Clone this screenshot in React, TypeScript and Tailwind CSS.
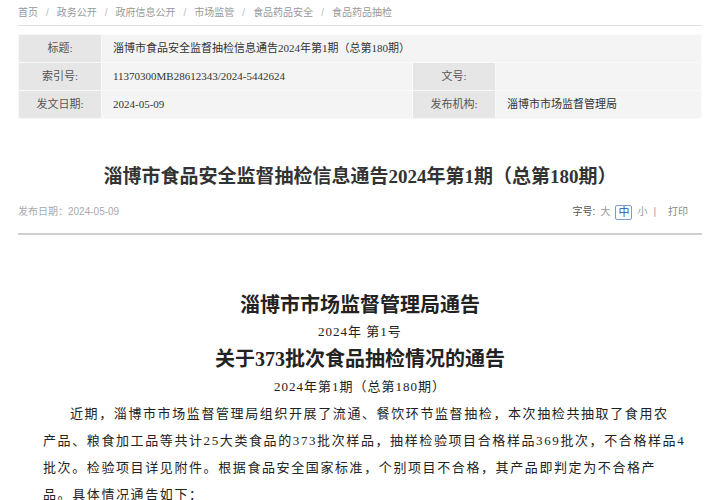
import React from 'react';

// Breadcrumb trail at the top of the page
const crumbs = ['首页', '政务公开', '政府信息公开', '市场监管', '食品药品安全', '食品药品抽检'];

const serif = "font-['Liberation_Serif','Noto_Sans_CJK_SC',serif]";
const sans = "font-['Liberation_Sans','Noto_Sans_CJK_SC',sans-serif]";

function MetaTable() {
  const label = 'bg-[#e6e6e6] text-[#555] text-center border border-[#f8f8f8]';
  const value = 'bg-[#f4f4f4] text-[#333] pl-[11px] border border-[#fafafa]';
  return (
    <table className={`w-full mt-[8px] border-collapse border border-[#dedede] text-[11px] ${serif}`}>
      <tbody>
        <tr className="h-[28px]">
          <td className={`${label} w-[83px]`}>标题:</td>
          <td className={value} colSpan={3}>
            淄博市食品安全监督抽检信息通告2024年第1期（总第180期）
          </td>
        </tr>
        <tr className="h-[28px]">
          <td className={label}>索引号:</td>
          <td className={`${value} w-[311px]`}>11370300MB28612343/2024-5442624</td>
          <td className={`${label} w-[83px]`}>文号:</td>
          <td className={value}></td>
        </tr>
        <tr className="h-[28px]">
          <td className={label}>发文日期:</td>
          <td className={value}>2024-05-09</td>
          <td className={label}>发布机构:</td>
          <td className={value}>淄博市市场监督管理局</td>
        </tr>
      </tbody>
    </table>
  );
}

export default function App() {
  return (
    <div className="w-[720px] h-[500px] overflow-hidden bg-white">
      <div className="mx-[18px]">
        {/* breadcrumb */}
        <div className={`h-[26px] flex items-center border-b border-[#e2e2e2] text-[10px] text-[#999] ${sans}`}>
          {crumbs.map((c, i) => (
            <React.Fragment key={c}>
              {i > 0 && <span className="mx-[8px] text-[#bbb]">/</span>}
              <span>{c}</span>
            </React.Fragment>
          ))}
        </div>

        <MetaTable />

        {/* article title */}
        <h1 className={`mt-[44px] text-center text-[19px] leading-[28px] font-bold text-[#333] ${serif}`}>
          淄博市食品安全监督抽检信息通告2024年第1期（总第180期）
        </h1>

        {/* publish info + font size tools */}
        <div className={`mt-[13px] pb-[13px] border-b-2 border-[#cfcfcf] flex items-center justify-between text-[10px] leading-[16px] ${sans}`}>
          <span className="text-[#aaa]">发布日期：2024-05-09</span>
          <div className="flex items-center mr-[14px] text-[#999]">
            <span className="text-[#555]">字号:</span>
            <span className="ml-[5px]">大</span>
            <span className="ml-[5px] px-[2px] border border-[#7b9ccc] rounded-[2px] text-[#1d5aa6] text-[11px] leading-[13px]">中</span>
            <span className="ml-[5px]">小</span>
            <span className="ml-[6px]">|</span>
            <span className="ml-[12px] text-[#888]">打印</span>
          </div>
        </div>

        {/* notice body */}
        <div className={`mt-[56px] text-[#222] ${serif}`}>
          <div className="text-center text-[20px] leading-[28px] font-bold">淄博市市场监督管理局通告</div>
          <div className="text-center text-[13px] leading-[26px] tracking-[1px]">2024年 第1号</div>
          <div className="text-center text-[20px] leading-[28px] font-bold">关于373批次食品抽检情况的通告</div>
          <div className="text-center text-[13px] leading-[27px] tracking-[1px]">2024年第1期（总第180期）</div>
          <p className="px-[25px] indent-[27px] text-[13px] leading-[27px] tracking-[1.6px] whitespace-nowrap">
            近期，淄博市市场监督管理局组织开展了流通、餐饮环节监督抽检，本次抽检共抽取了食用农
            <br />
            产品、粮食加工品等共计25大类食品的373批次样品，抽样检验项目合格样品369批次，不合格样品4
            <br />
            批次。检验项目详见附件。根据食品安全国家标准，个别项目不合格，其产品即判定为不合格产
            <br />
            品。具体情况通告如下：
          </p>
        </div>
      </div>
    </div>
  );
}
